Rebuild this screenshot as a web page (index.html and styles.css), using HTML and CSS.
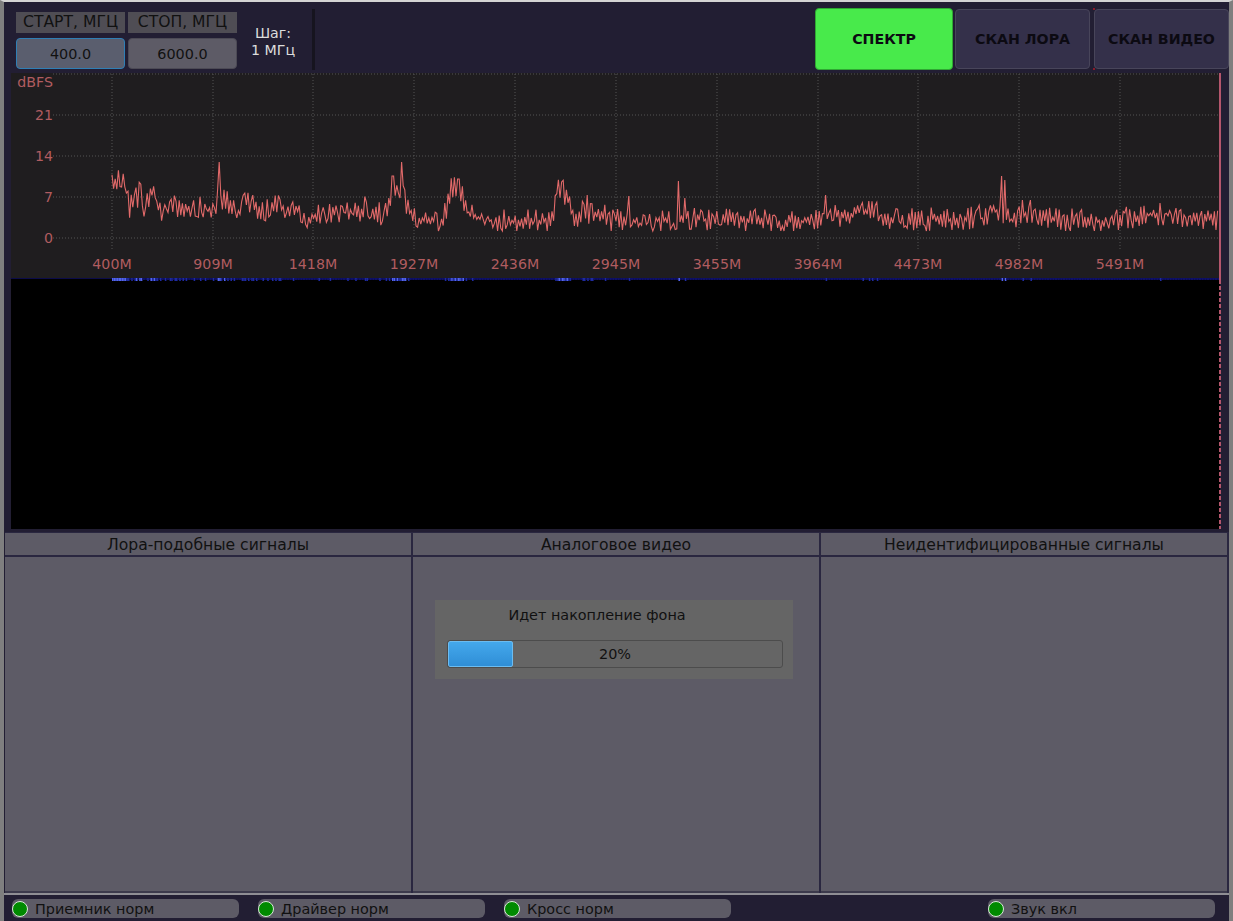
FILE: index.html
```html
<!DOCTYPE html>
<html lang="en">
<head>
  <meta charset="UTF-8">
  <title>Спектр</title>
  <link rel="stylesheet" href="styles.css">
</head>
<body>
  <div class="app">

    <!-- Top bar -->
    <div class="topbar">
      <div class="range">
        <div class="range-label">СТАРТ, МГЦ</div>
        <div class="range-label">СТОП, МГЦ</div>
        <div class="range-input focused">400.0</div>
        <div class="range-input">6000.0</div>
      </div>
      <div class="step">Шаг:<br>1 МГц</div>
      <div class="separator"></div>
      <div class="modes">
        <button class="mode active">СПЕКТР</button>
        <button class="mode">СКАН ЛОРА</button>
        <button class="mode marked">СКАН ВИДЕО</button>
      </div>
    </div>

    <!-- Spectrum + waterfall -->
    <svg class="plot" width="1211" height="456" viewBox="11 73 1211 456">
      <rect x="11" y="73" width="1209" height="205" fill="#1f1d1f"/>
      <rect x="11" y="278" width="1209" height="251" fill="#000"/>
      <g id="grid" class="grid"></g>
      <g class="axis">
        <text x="53" y="87" text-anchor="end">dBFS</text>
        <text x="53" y="120" text-anchor="end">21</text>
        <text x="53" y="161" text-anchor="end">14</text>
        <text x="53" y="202" text-anchor="end">7</text>
        <text x="53" y="243" text-anchor="end">0</text>
        <text x="112" y="269" text-anchor="middle">400M</text>
        <text x="213" y="269" text-anchor="middle">909M</text>
        <text x="313" y="269" text-anchor="middle">1418M</text>
        <text x="414" y="269" text-anchor="middle">1927M</text>
        <text x="515" y="269" text-anchor="middle">2436M</text>
        <text x="616" y="269" text-anchor="middle">2945M</text>
        <text x="717" y="269" text-anchor="middle">3455M</text>
        <text x="818" y="269" text-anchor="middle">3964M</text>
        <text x="918" y="269" text-anchor="middle">4473M</text>
        <text x="1019" y="269" text-anchor="middle">4982M</text>
        <text x="1120" y="269" text-anchor="middle">5491M</text>
      </g>
      <polyline id="trace" class="trace" points=""/>
      <rect x="11" y="278" width="1209" height="1" fill="#0c0c4a"/>
      <g id="strip"></g>
      <line class="marker" x1="1220" y1="73" x2="1220" y2="280"/>
      <line class="marker dashed" x1="1220" y1="280" x2="1220" y2="529"/>
    </svg>

    <!-- Signal tables -->
    <div class="tables">
      <div class="column">
        <div class="column-head">Лора-подобные сигналы</div>
        <div class="column-body"></div>
      </div>
      <div class="column">
        <div class="column-head">Аналоговое видео</div>
        <div class="column-body">
          <div class="progress-box">
            <div class="progress-title">Идет накопление фона</div>
            <div class="progress">
              <div class="progress-fill" style="width: 19.5%"></div>
              <div class="progress-text">20%</div>
            </div>
          </div>
        </div>
      </div>
      <div class="column">
        <div class="column-head">Неидентифицированные сигналы</div>
        <div class="column-body"></div>
      </div>
    </div>

    <!-- Status bar -->
    <div class="statusbar">
      <div class="status"><span class="led"></span>Приемник норм</div>
      <div class="status"><span class="led"></span>Драйвер норм</div>
      <div class="status"><span class="led"></span>Кросс норм</div>
      <div class="status sound"><span class="led"></span>Звук вкл</div>
    </div>
  </div>

  <script src="script.js"></script>
</body>
</html>
```

FILE: styles.css
```css
* { margin: 0; padding: 0; box-sizing: border-box; }
body {
  font-family: "DejaVu Sans", sans-serif;
  background: #221e33;
  color: #111;
}
.app {
  width: 1233px;
  height: 921px;
  display: flex;
  flex-direction: column;
  background: #221e33;
  border-top: 2px solid #d4d4d4;
  border-left: 4px solid #7f7f7f;
  border-right: 4px solid #7f7f7f;
}

/* top bar */
.topbar {
  height: 71px;
  flex: none;
  display: flex;
  align-items: flex-start;
  padding-left: 12px;
}
.range {
  display: grid;
  grid-template-columns: 109px 109px;
  grid-template-rows: 21px 31px;
  column-gap: 3px;
  row-gap: 5px;
  margin-top: 10px;
}
.range-label {
  background: #4f4d54;
  color: #111;
  font-size: 15.6px;
  line-height: 21px;
  text-align: center;
}
.range-input {
  background: #5d5b66;
  border: 1px solid #4c4a55;
  border-radius: 4px;
  color: #111;
  font-size: 14.4px;
  line-height: 30px;
  text-align: center;
}
.range-input.focused {
  background: #5a5e6e;
  border-color: #2f7fb5;
}
.step {
  width: 72px;
  margin-top: 23px;
  color: #dcdcdc;
  font-size: 14.2px;
  line-height: 17px;
  text-align: center;
}
.separator {
  width: 3px;
  height: 61px;
  margin-top: 7px;
  margin-left: 3px;
  background: #16141f;
}
.modes {
  margin-left: auto;
  display: flex;
  align-items: center;
  height: 63px;
  margin-top: 5px;
}
.mode {
  width: 135px;
  height: 60px;
  margin-left: 2px;
  background: #34304a;
  border: 1px solid #48455a;
  border-radius: 4px;
  color: #0c0a12;
  font-family: "DejaVu Sans", sans-serif;
  font-size: 14.2px;
  font-weight: bold;
  position: relative;
}
.mode.active {
  width: 138px;
  height: 62px;
  margin-left: 0;
  background: #48ea4b;
  border: 1px solid #2fa832;
}
.mode.marked { margin-left: 4px; }
.mode.marked::before,
.mode.marked::after {
  content: "";
  position: absolute;
  left: -2px;
  width: 2px;
  height: 2px;
  background: #8a1a2a;
}
.mode.marked::before { top: -2px; }
.mode.marked::after { bottom: -2px; }

/* plot */
.plot {
  display: block;
  flex: none;
  margin-left: 7px;
  margin-bottom: 3px;
}
.grid line {
  stroke: #555;
  stroke-width: 1;
  stroke-dasharray: 1 2;
}
.axis text {
  fill: #b05c60;
  font-size: 14.2px;
  font-family: "DejaVu Sans", sans-serif;
}
.trace {
  fill: none;
  stroke: #e26a6a;
  stroke-width: 1.1;
}
.marker {
  stroke: #b4566c;
  stroke-width: 2;
}
.marker.dashed { stroke-dasharray: 4 2; }

/* tables */
.tables {
  height: 363px;
  flex: none;
  display: flex;
  padding-left: 1px;
  border-bottom: 2px solid #8f8e94;
}
.column {
  width: 408px;
  display: flex;
  flex-direction: column;
  border-right: 2px solid #2a2740;
}
.column-head {
  height: 25px;
  flex: none;
  background: #5d5b66;
  border-top: 1px solid #2a2740;
  border-bottom: 2px solid #2a2740;
  color: #111;
  font-size: 15.6px;
  line-height: 24px;
  text-align: center;
}
.column-body {
  flex: 1;
  background: #5d5b66;
  border-bottom: 2px solid #3c3a4c;
}
.progress-box {
  width: 358px;
  height: 79px;
  margin-top: 43px;
  margin-left: 22px;
  padding: 7px 10px 0 12px;
  background: #656565;
}
.progress-title {
  font-size: 14.4px;
  line-height: 17px;
  text-align: center;
  padding-right: 36px;
  color: #111;
}
.progress {
  height: 28px;
  margin-top: 16px;
  border: 1px solid #4c4c4c;
  border-radius: 3px;
  position: relative;
  overflow: hidden;
}
.progress-fill {
  height: 100%;
  background: linear-gradient(to bottom, #44a8ec, #2f8ed6);
  border: 1px solid #6cbcf0;
  border-radius: 2px;
}
.progress-text {
  position: absolute;
  top: 0;
  left: 0;
  right: 0;
  font-size: 14.4px;
  line-height: 26px;
  text-align: center;
  color: #111;
}

/* status bar */
.statusbar {
  flex: 1;
  display: flex;
  align-items: flex-start;
  padding: 4px 0 0 8px;
}
.status {
  width: 227px;
  height: 19px;
  margin-right: 19px;
  display: flex;
  align-items: center;
  gap: 7px;
  background: #5d5b66;
  border-radius: 6px;
  font-size: 14.4px;
  color: #111;
}
.status.sound { margin-left: 238px; margin-right: 0; }
.led {
  width: 16px;
  height: 16px;
  border-radius: 50%;
  background: #008a00;
  border: 1px solid #d8e8d8;
}
```

FILE: script.js
```js
// envelope of the trace: [x, y] control points
const env = [
  [112,176],[123,185],[130,208],[140,192],[145,212],[153,188],[160,214],[175,206],[190,208],
  [213,208],[219,198],[227,202],[237,215],[245,194],[257,214],[277,206],[293,208],[310,219],
  [333,212],[357,212],[367,206],[383,216],[392,194],[403,184],[407,206],[413,220],[443,222],
  [452,186],[457,184],[463,198],[470,216],[490,221],[552,221],[556,192],[562,188],[567,198],
  [573,220],[580,212],[600,213],[612,221],[700,219],[800,221],[826,217],[840,215],[863,212],
  [880,210],[888,220],[960,219],[990,214],[1000,216],[1010,220],[1023,212],[1035,216],
  [1060,219],[1100,221],[1147,215],[1180,215],[1218,220]
];
// hand placed peaks
const spikes = { 219:162, 402:162, 393:176, 679:181, 685:198, 826:195, 1002:176, 1005:180, 1023:200, 1030:200, 587:195, 629:196 };

let seed = 12345;
function rnd() {
  seed = (seed * 16807) % 2147483647;
  return seed / 2147483647;
}

function envAt(x) {
  for (let i = 1; i < env.length; i++) {
    if (x <= env[i][0]) {
      const a = env[i - 1], b = env[i];
      return a[1] + (b[1] - a[1]) * (x - a[0]) / (b[0] - a[0]);
    }
  }
  return env[env.length - 1][1];
}

const pts = [];
let up = true;
let svgStrip = '';
for (let x = 112; x <= 1218; x += 1.6) {
  // the trace jumps up and down from bin to bin
  const jump = rnd() * 12;
  let y = envAt(x) + (up ? -jump : jump);
  up = !up;
  if (rnd() < 0.2) up = !up;
  if (y > 231) y = 231;
  for (const s in spikes) {
    if (Math.abs(s - x) < 1) y = spikes[s];
  }
  pts.push(x.toFixed(1) + ',' + y.toFixed(1));

  // first row of the waterfall follows the trace
  const bright = y < 190 ? '#5264f0' : y < 205 ? '#1e2aa0' : '#0e1068';
  svgStrip += '<rect x="' + x.toFixed(1) + '" y="278" width="1.6" height="' + (y < 205 ? 3 : 2) + '" fill="' + bright + '"/>';
}
document.getElementById('trace').setAttribute('points', pts.join(' '));
document.getElementById('strip').innerHTML = svgStrip;

// dotted grid
const vert = [112, 213, 313, 414, 515, 616, 717, 818, 918, 1019, 1120];
const horiz = [74, 115, 156, 197, 238];
let grid = '';
vert.forEach(x => { grid += '<line x1="' + x + '" y1="74" x2="' + x + '" y2="250"/>'; });
horiz.forEach(y => { grid += '<line x1="53" y1="' + y + '" x2="1218" y2="' + y + '"/>'; });
document.getElementById('grid').innerHTML = grid;
```
